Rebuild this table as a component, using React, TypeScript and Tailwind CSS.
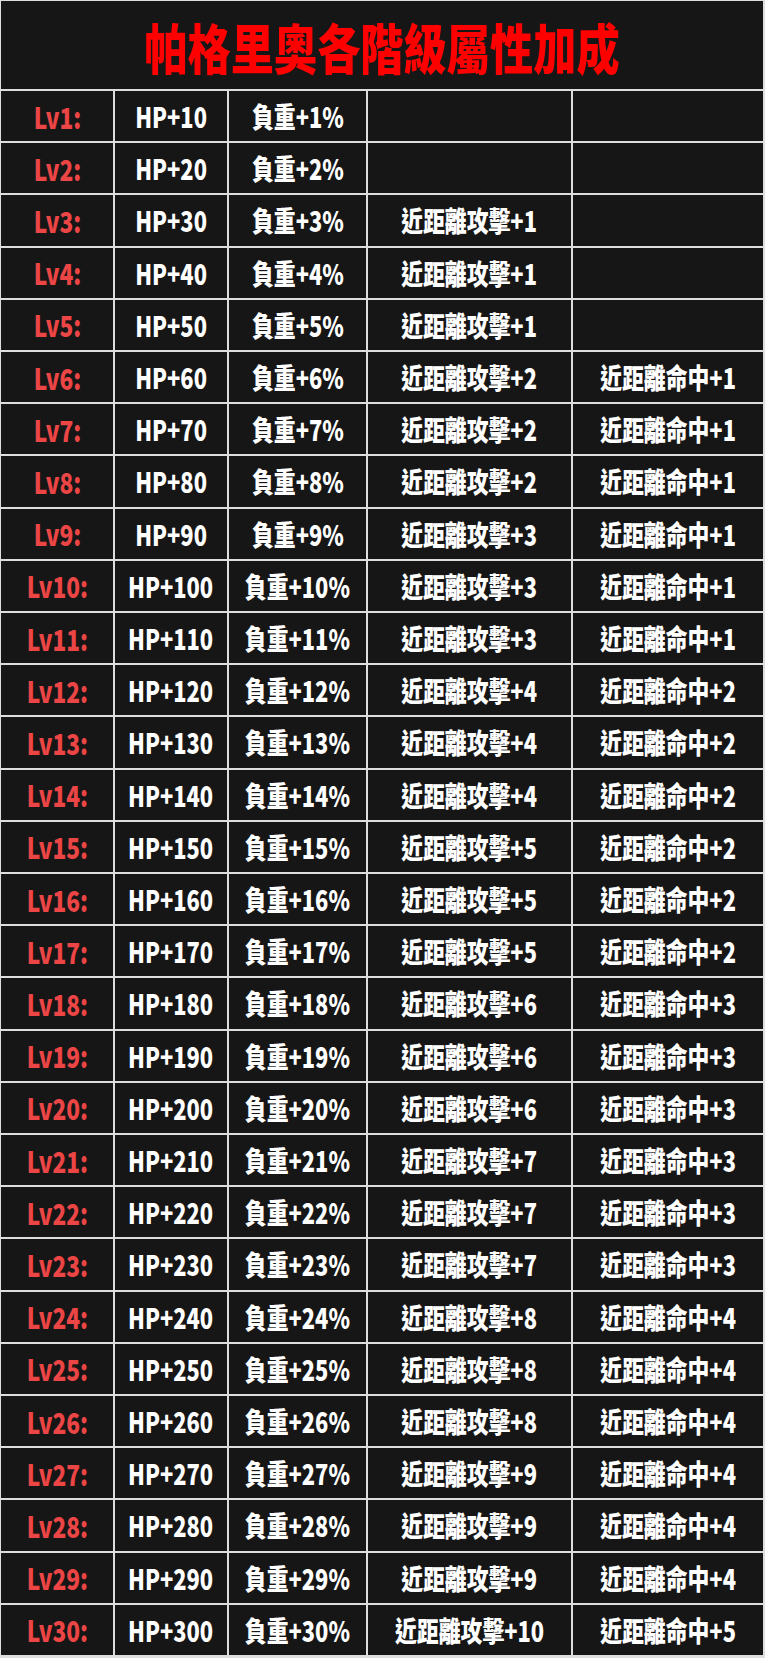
const levels = Array.from({ length: 30 }, (_, i) => i + 1)

function Cell({ children, red }: { children?: React.ReactNode; red?: boolean }) {
  return (
    <div className="bg-[#161616] flex items-center justify-center overflow-hidden">
      {children ? (
        <span
          className={`inline-block whitespace-nowrap font-black leading-none scale-x-[0.78] ${
            red ? 'text-[#ec4545] text-[29px]' : 'text-white text-[28px]'
          }`}
        >
          {children}
        </span>
      ) : null}
    </div>
  )
}

export default function App() {
  return (
    <div
      className="w-[765px] h-[1658px] bg-[#dedede] pt-px pl-px pr-[2px] pb-[3px]"
      style={{ fontFamily: '"Noto Sans CJK TC", "Noto Sans", sans-serif' }}
    >
      <div className="h-full grid grid-cols-[112px_112px_137px_203px_1fr] grid-rows-[88px_repeat(30,1fr)] gap-[2px]">
        {/* 標題 */}
        <div className="col-span-5 bg-[#161616] flex items-center justify-center">
          <span className="inline-block whitespace-nowrap font-black text-[54px] leading-none text-[#ff0000] scale-x-[0.8] mt-1">
            帕格里奧各階級屬性加成
          </span>
        </div>

        {levels.map(lv => {
          const atk = Math.floor(lv / 3)
          const hit = Math.floor(lv / 6)
          return [
            <Cell key={`a${lv}`} red>Lv{lv}:</Cell>,
            <Cell key={`b${lv}`}>HP+{lv * 10}</Cell>,
            <Cell key={`c${lv}`}>負重+{lv}%</Cell>,
            <Cell key={`d${lv}`}>{atk > 0 ? `近距離攻擊+${atk}` : null}</Cell>,
            <Cell key={`e${lv}`}>{hit > 0 ? `近距離命中+${hit}` : null}</Cell>,
          ]
        })}
      </div>
    </div>
  )
}
